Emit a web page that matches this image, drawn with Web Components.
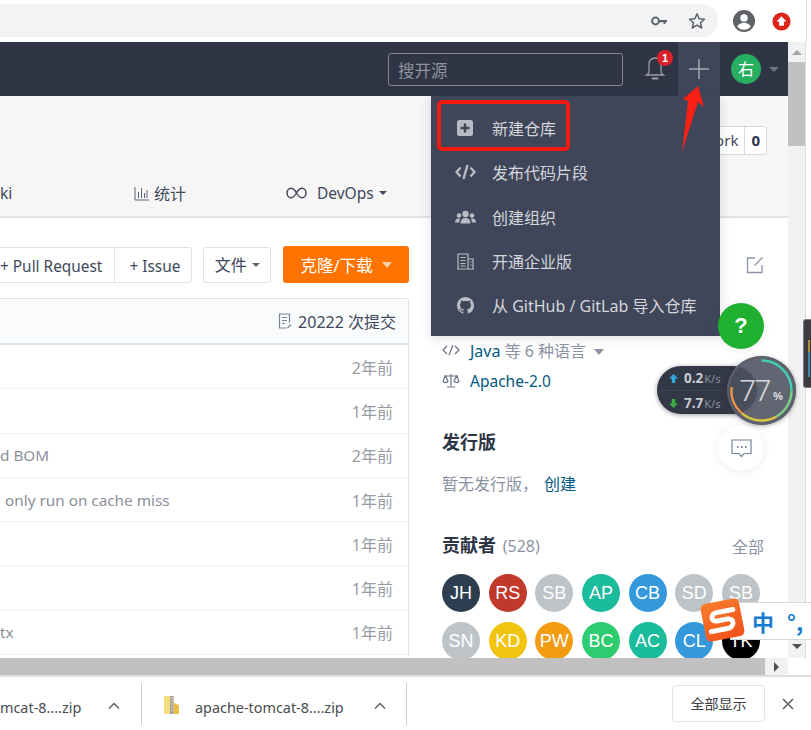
<!DOCTYPE html>
<html lang="zh">
<head>
<meta charset="utf-8">
<title>Gitee</title>
<style>
html,body{margin:0;padding:0;background:#fff;}
body{width:811px;height:730px;overflow:hidden;position:relative;display:flex;flex-direction:column;
  font-family:"Noto Sans","Noto Sans CJK SC",sans-serif;}
.shell{display:flex;flex:none;height:616px;width:806px;}
.page{flex:none;width:788px;height:616px;overflow:hidden;background:#fff;}
.main{display:flex;gap:33px;align-items:flex-start;}
</style>
</head>
<body>
<browser-bar></browser-bar>
<div class="shell">
  <div class="page">
    <site-nav></site-nav>
    <repo-head></repo-head>
    <div class="main">
      <repo-files></repo-files>
      <side-panel></side-panel>
    </div>
  </div>
  <scroll-v></scroll-v>
</div>
<scroll-h></scroll-h>
<download-bar></download-bar>

<new-menu></new-menu>
<red-notes></red-notes>
<float-tools></float-tools>
<speed-meter></speed-meter>
<side-widget></side-widget>
<ime-bar></ime-bar>

<script>
const FONT = '"Noto Sans","Noto Sans CJK SC",sans-serif';

class BrowserBar extends HTMLElement {
    connectedCallback() {
        this.attachShadow({ mode: 'open' }).innerHTML = `
      <style>
        :host{display:flex;align-items:center;flex:none;height:42px;width:806px;background:#fff;border-right:1px solid #dcdcdc;box-sizing:content-box;position:relative;overflow:hidden;}
        .omni{width:718px;height:33px;margin-top:-1px;background:#f1f3f4;border-radius:0 17px 17px 0;display:flex;align-items:center;justify-content:flex-end;gap:20px;padding-right:12px;box-sizing:border-box;flex:none;}
        .tools{display:flex;align-items:center;gap:16px;margin-left:14px;}
      </style>
      <div class="omni">
        <svg width="18" height="18" viewBox="0 0 18 18"><circle cx="5.500" cy="9" r="3.400" fill="none" stroke="#5f6368" stroke-width="2"/><path d="M9 8h8v2.200h-1.500V12h-2v-1.800H9z" fill="#5f6368"/></svg>
        <svg width="18" height="18" viewBox="0 0 18 18"><path d="M9 1.800l2.100 5 5.400.4-4.100 3.500 1.300 5.300L9 13.200l-4.700 2.800 1.300-5.300L1.500 7.200l5.400-.4z" fill="none" stroke="#5f6368" stroke-width="1.500" stroke-linejoin="round"/></svg>
      </div>
      <div class="tools">
        <svg width="24" height="24" viewBox="0 0 24 24"><circle cx="12" cy="12" r="11" fill="#5f6368"/><circle cx="12" cy="9" r="3.700" fill="#fff"/><path d="M5.200 17.500c1.500-2.700 4-3.800 6.800-3.800s5.300 1.100 6.800 3.800c-1.600 2-4 3.300-6.800 3.300s-5.200-1.300-6.800-3.300z" fill="#fff"/></svg>
        <svg width="19" height="19" viewBox="0 0 20 20"><circle cx="10" cy="10" r="9.500" fill="#dc2418"/><path d="M10 4.500l5.200 5.500h-2.700v4.500h-5V10H4.800z" fill="#fff"/></svg>
      </div>
      <svg style="position:absolute;left:808px;top:11px" width="20" height="20" viewBox="0 0 20 20"><circle cx="10" cy="10" r="9.500" fill="#dc2418"/></svg>
    `;
    }
}

class SiteNav extends HTMLElement {
    connectedCallback() {
        this.attachShadow({ mode: 'open' }).innerHTML = `
      <style>
        :host{display:flex;align-items:stretch;justify-content:flex-end;height:54px;background:#2f3545;}
        .search{width:235px;height:33px;box-sizing:border-box;margin-top:11px;border:1.500px solid #81858f;border-radius:3px;color:#90939c;font-size:16.500px;line-height:30px;padding:2px 0 0 9px;font-family:${FONT};}
        .bell{width:55px;display:flex;justify-content:center;align-items:center;position:relative;}
        .bell svg{margin-left:9px;margin-top:-1px;}
        .badge{position:absolute;left:34px;top:8px;width:16px;height:16px;border-radius:50%;background:#d9222a;color:#fff;font:bold 11px/16px "Liberation Sans",sans-serif;text-align:center;}
        .plus{width:42px;background:#3f4659;display:flex;align-items:center;justify-content:center;}
        .me{width:68px;display:flex;align-items:center;padding-left:11px;box-sizing:border-box;gap:8px;}
        .face{width:30px;height:30px;border-radius:50%;background:#27ae60;color:#fff;font-size:16px;line-height:30px;text-align:center;font-family:${FONT};}
        .caret{width:0;height:0;border:5px solid transparent;border-top:5px solid #6f7585;border-bottom:0;}
      </style>
      <div class="search">搜开源</div>
      <div class="bell">
        <svg width="24" height="28" viewBox="0 0 24 28"><path d="M12 3c-4.300 0-6 3.400-6 7v6.500c0 1.500-1 2.600-2.500 3.500h17c-1.500-.9-2.500-2-2.500-3.500V10c0-3.600-1.700-7-6-7z" fill="none" stroke="#9a9da6" stroke-width="1.300"/><path d="M9.500 23.500h5" stroke="#9a9da6" stroke-width="2" stroke-linecap="round"/></svg>
        <span class="badge">1</span>
      </div>
      <div class="plus">
        <svg width="22" height="22" viewBox="0 0 22 22"><path d="M11 1v20M1 11h20" stroke="#a6aab3" stroke-width="1.500"/></svg>
      </div>
      <div class="me"><span class="face">右</span><span class="caret"></span></div>
    `;
    }
}

class RepoHead extends HTMLElement {
    connectedCallback() {
        this.attachShadow({ mode: 'open' }).innerHTML = `
      <style>
        :host{display:block;height:122px;box-sizing:border-box;background:#f6f6f6;border-bottom:2px solid #e3e3e3;font-family:${FONT};color:#40485b;}
        .top{display:flex;justify-content:flex-end;height:81px;padding:30px 21px 0 0;box-sizing:border-box;}
        .fork{display:flex;height:29px;box-sizing:border-box;border:1px solid #d4d9e0;border-radius:3px;background:#fff;font-size:15px;line-height:27px;}
        .fork span{padding:0 6px 0 15px;}
        .fork b{border-left:1px solid #d4d9e0;padding:0 6px;color:#2d3850;}
        .tabs{display:flex;align-items:center;height:32px;font-size:15.500px;}
        .tab{display:flex;align-items:center;gap:5px;white-space:nowrap;}
        .tab.ki{width:134px;}
        .tab.stat{width:152px;font-size:16px;}
        .tab.dev{gap:10px;}
        .caret{display:inline-block;width:0;height:0;border:4px solid transparent;border-top:4px solid #40485b;border-bottom:0;margin-left:-5px;}
      </style>
      <div class="top"><div class="fork"><span>Fork</span><b>0</b></div></div>
      <div class="tabs">
        <div class="tab ki">ki</div>
        <div class="tab stat">
          <svg width="15" height="15" viewBox="0 0 15 15"><path d="M1 1v13h14M4.500 12V6M7.500 12V2M10.500 12V7M13 12V4" fill="none" stroke="#5b6478" stroke-width="1"/></svg>
          统计
        </div>
        <div class="tab dev">
          <svg width="21" height="12" viewBox="0 0 21 12"><path d="M10.500 6C8.500 2.500 7 1.300 5 1.300 2.700 1.300 1 3.300 1 6s1.700 4.700 4 4.700c2 0 3.500-1.200 5.500-4.700zm0 0c2-3.500 3.500-4.700 5.500-4.700 2.300 0 4 2 4 4.700s-1.700 4.700-4 4.700c-2 0-3.500-1.200-5.500-4.700z" fill="none" stroke="#40485b" stroke-width="1.500"/></svg>
          <span>DevOps</span><span class="caret"></span>
        </div>
      </div>
    `;
    }
}

class RepoFiles extends HTMLElement {
    connectedCallback() {
        this.attachShadow({ mode: 'open' }).innerHTML = `
      <style>
        :host{display:block;flex:none;width:409px;padding-top:28px;font-family:${FONT};color:#40485b;font-size:15.400px;}
        .acts{display:flex;align-items:stretch;height:37px;justify-content:flex-end;}
        .group{display:flex;border:1px solid #dce3e8;border-left:0;border-radius:0 3px 3px 0;height:36px;margin-top:1px;box-sizing:border-box;line-height:38px;background:#fff;white-space:nowrap;}
        .group span{padding:0 11px 0 14px;}
        .group .pr{padding:0 12px 0 0;border-right:1px solid #dce3e8;}
        .file{margin-left:11px;width:68px;height:36px;margin-top:1px;box-sizing:border-box;border:1px solid #dce3e8;border-radius:3px;font-size:16px;line-height:34px;display:flex;align-items:center;justify-content:center;gap:5px;}
        .clone{margin-left:12px;width:126px;background:#ff7300;border-radius:3px;color:#fff;font-size:16.500px;display:flex;align-items:center;justify-content:center;gap:9px;}
        .cr{width:0;height:0;border:4px solid transparent;border-top:4px solid #5c6478;border-bottom:0;}
        .clone .cr{border-width:6px 5px 0;border-top-color:#ffd2a8;border-style:solid;border-left-color:transparent;border-right-color:transparent;}
        .box{margin-top:15px;border:1px solid #dce3e8;border-left:0;border-bottom:0;border-radius:0 4px 0 0;}
        .head{height:44px;background:#fafbfc;border-bottom:2px solid #dce3e8;box-sizing:content-box;display:flex;align-items:center;justify-content:flex-end;gap:5px;padding-right:12px;font-size:16px;}
      </style>
      <div class="acts">
        <div class="group"><span class="pr">+ Pull Request</span><span>+ Issue</span></div>
        <div class="file">文件<i class="cr"></i></div>
        <div class="clone">克隆/下载<i class="cr"></i></div>
      </div>
      <div class="box">
        <div class="head">
          <svg width="15" height="18" viewBox="0 0 15 17"><path d="M11.500 10V1.500h-10v14h7M4 5h5M4 8h5M4 11h3M9.500 15.500l3.500-3.500" fill="none" stroke="#7b8494" stroke-width="1.200"/></svg>
          <span>20222 次提交</span>
        </div>
        <commit-row age="2年前"></commit-row>
        <commit-row age="1年前"></commit-row>
        <commit-row age="2年前" msg="d BOM"></commit-row>
        <commit-row age="1年前" msg="only run on cache miss" pad="5"></commit-row>
        <commit-row age="1年前"></commit-row>
        <commit-row age="1年前"></commit-row>
        <commit-row age="1年前" msg="tx"></commit-row>
      </div>
    `;
    }
}

class CommitRow extends HTMLElement {
    connectedCallback() {
        const msg = this.getAttribute('msg') || '';
        const pad = this.getAttribute('pad') || 0;
        this.attachShadow({ mode: 'open' }).innerHTML = `
      <style>
        :host{display:flex;justify-content:space-between;align-items:center;height:44.300px;box-sizing:border-box;border-bottom:1px solid #f1f3f5;color:#8b8f99;font-size:15.300px;padding:0 15px 0 ${pad}px;font-family:${FONT};}
        .age{color:#979ba5;font-size:16px;}
      </style>
      <span>${msg}</span><span class="age">${this.getAttribute('age')}</span>
    `;
    }
}

class SidePanel extends HTMLElement {
    connectedCallback() {
        const people = [['JH','#2c3e50'],['RS','#c0392b'],['SB','#bdc3c7'],['AP','#1abc9c'],['CB','#3498db'],['SD','#bdc3c7'],['SB','#bdc3c7'],
            ['SN','#bdc3c7'],['KD','#f1c40f'],['PW','#f39c12'],['BC','#2ecc71'],['AC','#1abc9c'],['CL','#3498db'],['TK','#000']];
        const chips = people.map(p => `<div class="chip" style="background:${p[1]}">${p[0]}</div>`).join('');
        this.attachShadow({ mode: 'open' }).innerHTML = `
      <style>
        :host{display:block;flex:none;width:322px;font-family:${FONT};color:#40485b;font-size:16px;}
        .edit{display:flex;justify-content:flex-end;height:116px;padding-top:38px;box-sizing:border-box;}
        .line{display:flex;align-items:center;height:31px;gap:8px;}
        .line a{color:#005980;}
        .gray{color:#8b93a3;}
        .sm{display:inline-block;width:0;height:0;border:5px solid transparent;border-top:6px solid #8b93a3;border-bottom:0;margin-left:8px;vertical-align:2px;}
        h3{margin:0;font-size:18px;font-weight:700;color:#2d3545;line-height:26px;}
        .rel{margin-top:33px;}
        .none{margin-top:16px;height:26px;line-height:26px;color:#8b93a3;white-space:nowrap;}
        .none a{color:#005980;margin-left:6px;}
        .con{display:flex;justify-content:space-between;align-items:center;margin-top:35px;}
        .con h3 small{font-size:16px;font-weight:400;color:#8b93a3;margin-left:2px;}
        .all{color:#8b93a3;}
        .grid{display:grid;grid-template-columns:repeat(7,38px);column-gap:8.670px;row-gap:10px;margin-top:15px;}
        .chip{width:38px;height:38px;border-radius:50%;color:#fff;font:18px/38px "Liberation Sans",sans-serif;text-align:center;}
      </style>
      <div class="edit">
        <svg width="18" height="18" viewBox="0 0 18 18"><path d="M9 2H1.500v14.500H16V9M16.500 1.500L8.500 9.500" fill="none" stroke="#8a94a6" stroke-width="1.300"/></svg>
      </div>
      <div class="line">
        <svg width="18" height="12" viewBox="0 0 18 12"><path d="M5 2L1 6l4 4M13 2l4 4-4 4M11 1L7 11" fill="none" stroke="#667085" stroke-width="1.200"/></svg>
        <span style="margin-left:2px"><a>Java</a> <span class="gray">等 6 种语言</span><i class="sm"></i></span>
      </div>
      <div class="line">
        <svg width="18" height="15" viewBox="0 0 18 15"><path d="M9 1v12M5 14h8M2 3h14M3.500 3L1 8c.5 2 4.500 2 5 0L3.500 3zM14.500 3L12 8c.5 2 4.500 2 5 0l-2.500-5z" fill="none" stroke="#667085" stroke-width="1.200"/></svg>
        <a style="margin-left:2px;font-size:15.500px">Apache-2.0</a>
      </div>
      <div class="rel"><h3>发行版</h3></div>
      <div class="none">暂无发行版，<a>创建</a></div>
      <div class="con"><h3>贡献者 <small>(528)</small></h3><span class="all">全部</span></div>
      <div class="grid">${chips}</div>
    `;
    }
}

class ScrollV extends HTMLElement {
    connectedCallback() {
        this.attachShadow({ mode: 'open' }).innerHTML = `
      <style>
        :host{display:flex;flex-direction:column;flex:none;width:18px;height:616px;background:#f1f1f1;box-sizing:border-box;border-right:1px solid #dcdcdc;}
        .btn{height:20px;display:flex;align-items:center;justify-content:center;flex:none;}
        .thumb{height:84px;background:#c1c1c1;flex:none;}
        .sp{flex:1;}
        .up{width:0;height:0;border:5px solid transparent;border-bottom:5px solid #a3a3a3;border-top:0;}
        .dn{width:0;height:0;border:5px solid transparent;border-top:5px solid #505050;border-bottom:0;}
      </style>
      <div class="btn"><i class="up"></i></div>
      <div class="thumb"></div>
      <div class="sp"></div>
      <div class="btn" style="margin-bottom:2px"><i class="dn"></i></div>
    `;
    }
}

class ScrollH extends HTMLElement {
    connectedCallback() {
        this.attachShadow({ mode: 'open' }).innerHTML = `
      <style>
        :host{display:flex;flex:none;width:788px;height:17px;background:#f1f1f1;}
        .thumb{width:765px;background:#c1c1c1;}
        .btn{flex:1;display:flex;align-items:center;justify-content:center;}
        .r{width:0;height:0;border:5px solid transparent;border-left:5px solid #505050;border-right:0;}
      </style>
      <div class="thumb"></div>
      <div class="btn"><i class="r"></i></div>
    `;
    }
}

class DownloadBar extends HTMLElement {
    connectedCallback() {
        this.attachShadow({ mode: 'open' }).innerHTML = `
      <style>
        :host{display:flex;align-items:center;flex:none;height:55px;box-sizing:border-box;border-top:2px solid #dcdfe3;background:#fff;font-family:${FONT};color:#4a4d52;font-size:14.400px;}
        .btn{margin-left:auto;width:93px;height:37px;box-sizing:border-box;border:1px solid #e0e2e5;border-radius:4px;font-size:14px;line-height:35px;text-align:center;color:#3c4043;}
        .x{width:46px;display:flex;justify-content:center;}
      </style>
      <download-item name="mcat-8....zip" w="142"></download-item>
      <download-item name="apache-tomcat-8....zip" w="265" icon></download-item>
      <div class="btn">全部显示</div>
      <div class="x"><svg width="12" height="12" viewBox="0 0 12 12"><path d="M1 1l10 10M11 1L1 11" stroke="#5f6368" stroke-width="1.600"/></svg></div>
    `;
    }
}

class DownloadItem extends HTMLElement {
    connectedCallback() {
        const w = this.getAttribute('w');
        const icon = this.hasAttribute('icon');
        this.attachShadow({ mode: 'open' }).innerHTML = `
      <style>
        :host{display:flex;align-items:center;flex:none;width:${w}px;height:42px;box-sizing:border-box;border-right:1px solid #c8cbcf;}
        .ic{margin:3px 16px 0 22px;flex:none;}
        .name{white-space:nowrap;flex:none;width:${icon ? 167 : 100}px;padding-top:8px;}
        .up{margin:4px 0 0 ${icon ? 11 : 7}px;}
      </style>
      ${icon ? `<svg class="ic" width="15" height="18" viewBox="0 0 15 18"><path d="M0 0h10v18H0z" fill="#f6dc7c"/><path d="M10 7l5 2v9h-5z" fill="#eebf45"/><path d="M6 0h3.500v18H6z" fill="#a3a39b"/><path d="M7 2h1.500M7 5h1.500M7 8h1.500M7 11h1.500M7 14h1.500" stroke="#e8e8e0" stroke-width="1"/></svg>` : ''}
      <span class="name">${this.getAttribute('name')}</span>
      <svg class="up" width="14" height="9" viewBox="0 0 14 9"><path d="M2 7.500l5-5 5 5" fill="none" stroke="#5f6368" stroke-width="1.500"/></svg>
    `;
    }
}

class NewMenu extends HTMLElement {
    connectedCallback() {
        this.attachShadow({ mode: 'open' }).innerHTML = `
      <style>
        :host{position:absolute;left:431px;top:96px;width:289px;height:240px;background:#3f4659;box-shadow:0 2px 10px rgba(60,70,90,.18);padding-top:10px;box-sizing:border-box;display:block;font-family:${FONT};}
      </style>
      <menu-item label="新建仓库"><svg width="16" height="16" viewBox="0 0 16 16"><rect width="16" height="16" rx="2.500" fill="#b9bcc4"/><path d="M8 3.500v9M3.500 8h9" stroke="#3f4659" stroke-width="2.400"/></svg></menu-item>
      <menu-item label="发布代码片段"><svg width="21" height="16" viewBox="0 0 21 16"><path d="M5.500 3.500L1.500 8l4 4.500M15.500 3.500l4 4.500-4 4.500M12.500 1l-4 14" fill="none" stroke="#b9bcc4" stroke-width="2.400"/></svg></menu-item>
      <menu-item label="创建组织"><svg width="21" height="14" viewBox="0 0 21 14"><circle cx="10.500" cy="4" r="3.200" fill="#b9bcc4"/><circle cx="4" cy="5.500" r="2.300" fill="#b9bcc4"/><circle cx="17" cy="5.500" r="2.300" fill="#b9bcc4"/><path d="M5.500 13.500c0-3.500 2-5.500 5-5.500s5 2 5 5.500zM0 12.500c0-2.500 1.500-4 3.500-4 .7 0 1.200.2 1.600.4-.7 1-1 2.300-1 3.600zM21 12.500c0-2.500-1.500-4-3.500-4-.7 0-1.200.2-1.600.4.700 1 1 2.300 1 3.600z" fill="#b9bcc4"/></svg></menu-item>
      <menu-item label="开通企业版"><svg width="17" height="17" viewBox="0 0 17 17"><path d="M1 16V1h10v15M11 6h5v10M0 16h17M3.500 4.500h5M3.500 7.500h5M3.500 10.500h5M3.500 13h5M13 9h1.500M13 12h1.500" fill="none" stroke="#b9bcc4" stroke-width="1.200"/></svg></menu-item>
      <menu-item label="从 GitHub / GitLab 导入仓库"><svg width="17" height="17" viewBox="0 0 16 16"><path fill="#b9bcc4" d="M8 0C3.580 0 0 3.580 0 8c0 3.540 2.290 6.530 5.470 7.590.4.070.55-.17.55-.38 0-.19-.01-.82-.01-1.490-2.010.37-2.530-.49-2.690-.94-.09-.23-.48-.94-.82-1.130-.28-.15-.68-.52-.01-.53.630-.01 1.080.58 1.230.82.720 1.210 1.870.87 2.330.66.070-.52.280-.87.510-1.070-1.780-.2-3.640-.89-3.640-3.950 0-.87.310-1.590.820-2.150-.08-.2-.36-1.020.080-2.120 0 0 .670-.21 2.200.82.640-.18 1.320-.27 2-.27.680 0 1.360.09 2 .27 1.530-1.040 2.200-.82 2.200-.82.440 1.100.160 1.920.080 2.120.510.560.820 1.270.820 2.150 0 3.070-1.870 3.750-3.650 3.950.290.25.540.730.540 1.480 0 1.070-.01 1.930-.01 2.200 0 .210.150.460.550.380A8.013 8.013 0 0016 8c0-4.420-3.580-8-8-8z"/></svg></menu-item>
    `;
    }
}

class MenuItem extends HTMLElement {
    connectedCallback() {
        this.attachShadow({ mode: 'open' }).innerHTML = `
      <style>
        :host{display:flex;align-items:center;height:44.300px;color:#d5d7dc;font-size:16px;white-space:nowrap;}
        .ic{width:61px;padding-left:7px;box-sizing:border-box;display:flex;justify-content:center;flex:none;}
      </style>
      <span class="ic"><slot></slot></span>
      <span>${this.getAttribute('label')}</span>
    `;
    }
}

class RedNotes extends HTMLElement {
    connectedCallback() {
        this.attachShadow({ mode: 'open' }).innerHTML = `
      <style>
        :host{position:absolute;left:0;top:0;width:0;height:0;display:block;}
        .box{position:absolute;left:437px;top:100px;width:133px;height:51px;box-sizing:border-box;border:4px solid #f01a10;border-radius:5px;}
        svg{position:absolute;left:676px;top:82px;}
      </style>
      <div class="box"></div>
      <svg width="32" height="74" viewBox="0 0 32 74"><path d="M22 4l6 21-6-5L6 70l6-51-5-2z" fill="#fa2015"/></svg>
    `;
    }
}

class FloatTools extends HTMLElement {
    connectedCallback() {
        this.attachShadow({ mode: 'open' }).innerHTML = `
      <style>
        :host{position:absolute;left:718px;top:303px;width:46px;display:flex;flex-direction:column;gap:15px;}
        .b{width:46px;height:46px;border-radius:50%;background:#fff;box-shadow:0 1px 8px rgba(80,90,110,.12);display:flex;align-items:center;justify-content:center;}
        .help{background:#20b02f;color:#fff;font:bold 22px/46px "Liberation Sans",sans-serif;}
      </style>
      <div class="b help">?</div>
      <div class="b"><svg width="20" height="20" viewBox="0 0 20 20"><path d="M10 2H2v14h14v-5M9 9l8-6M13 2.500l4 .5-1 4" fill="none" stroke="#8a94a6" stroke-width="1.200"/></svg></div>
      <div class="b"><svg width="21" height="19" viewBox="0 0 21 19"><path d="M1 1h19v13.500h-7l-2.500 3-2.500-3H1z" fill="none" stroke="#76829a" stroke-width="1.200"/><path d="M6 8h1.500M10 8h1.500M14 8h1.500" stroke="#76829a" stroke-width="1.800"/></svg></div>
    `;
    }
}

class SpeedMeter extends HTMLElement {
    connectedCallback() {
        this.attachShadow({ mode: 'open' }).innerHTML = `
      <style>
        :host{position:absolute;left:657px;top:356px;width:139px;height:69px;display:block;font-family:${FONT};}
        .pill{position:absolute;left:0;top:10px;width:100px;height:48px;border-radius:24px;background:#333846;box-shadow:0 1px 5px rgba(40,40,50,.45);color:#c8cbd2;font:bold 13.500px/24px "Noto Sans",sans-serif;}
        .row{display:flex;align-items:center;height:24px;padding-left:12px;gap:6px;}
        .row small{font-size:11px;font-weight:400;color:#8c909b;margin-left:1px;}
        .row + .row{border-top:1px solid #3f4452;box-sizing:border-box;height:25px;}
        .dial{position:absolute;left:70px;top:0;width:69px;height:69px;border-radius:50%;background:rgba(76,81,94,.88);box-shadow:0 0 0 2px #5c606c inset,0 1px 4px rgba(40,40,50,.4);}
        .dial svg{position:absolute;left:0;top:0;}
        .num{position:absolute;left:12px;top:12px;font:300 30px/44px "Noto Sans",sans-serif;color:#d6d8dc;letter-spacing:-2px;}
        .pc{position:absolute;left:46px;top:32px;font:bold 11px/16px "Noto Sans",sans-serif;color:#d6d8dc;}
      </style>
      <div class="pill">
        <div class="row"><svg width="9" height="9" viewBox="0 0 9 9"><path d="M4.500 0L9 4.500H6.200V9H2.800V4.500H0z" fill="#35a9dc"/></svg><span>0.2<small>K/s</small></span></div>
        <div class="row"><svg width="9" height="9" viewBox="0 0 9 9"><path d="M4.500 9L9 4.500H6.200V0H2.800v4.500H0z" fill="#3dad46"/></svg><span>7.7<small>K/s</small></span></div>
      </div>
      <div class="dial">
        <svg width="69" height="69" viewBox="0 0 69 69" fill="none" stroke-width="2.400">
          <path d="M34.500 4.500A30 30 0 0 1 64.500 34.500" stroke="#3fd0b3"/>
          <path d="M64.500 34.500A30 30 0 0 1 49.500 60.500" stroke="#7dcf85"/>
          <path d="M49.500 60.500A30 30 0 0 1 15 57.300" stroke="#dcc840"/>
          <path d="M15 57.300A30 30 0 0 1 4.700 31" stroke="#e9964a"/>
        </svg>
        <span class="num">77</span><span class="pc">%</span>
      </div>
    `;
    }
}

class SideWidget extends HTMLElement {
    connectedCallback() {
        this.attachShadow({ mode: 'open' }).innerHTML = `
      <style>
        :host{position:absolute;left:803px;top:319px;width:8px;height:69px;box-sizing:border-box;background:#3a3d42;border:1px solid #777b80;border-right:0;border-radius:3px 0 0 3px;display:block;overflow:hidden;}
        i{display:block;position:absolute;left:4px;width:2px;opacity:.8;}
      </style>
      <i style="top:20px;height:12px;background:#c9a83c"></i>
      <i style="top:32px;height:25px;background:#3f9fc4"></i>
    `;
    }
}

class ImeBar extends HTMLElement {
    connectedCallback() {
        this.attachShadow({ mode: 'open' }).innerHTML = `
      <style>
        :host{position:absolute;left:700px;top:599px;width:111px;height:44px;display:block;}
        .bar{position:absolute;left:30px;top:3px;width:81px;height:38px;box-sizing:border-box;background:#fff;border:1px solid #d8d8d8;border-right:0;display:flex;align-items:center;color:#1a7cd0;}
        .z{font:bold 22px/34px "Noto Sans CJK SC",sans-serif;margin-left:21px;}
        .p{font:bold 22px/30px "Noto Sans CJK SC",sans-serif;margin-left:13px;white-space:nowrap;}
        .s{position:absolute;left:3px;top:2px;width:39px;height:38px;border-radius:5px;background:linear-gradient(160deg,#fb7d2c,#f04f1a);transform:rotate(-11deg);display:flex;align-items:center;justify-content:center;}
      </style>
      <div class="bar"><span class="z">中</span><span class="p">°,</span></div>
      <div class="s"><svg width="33" height="27" viewBox="0 0 30 24"><path d="M26 4H11C5 4 4 11 10 11.500h10C26 12 25 20 18 20H3" fill="none" stroke="#fff" stroke-width="4.500" stroke-linecap="round"/></svg></div>
    `;
    }
}

customElements.define('browser-bar', BrowserBar);
customElements.define('site-nav', SiteNav);
customElements.define('repo-head', RepoHead);
customElements.define('repo-files', RepoFiles);
customElements.define('commit-row', CommitRow);
customElements.define('side-panel', SidePanel);
customElements.define('scroll-v', ScrollV);
customElements.define('scroll-h', ScrollH);
customElements.define('download-bar', DownloadBar);
customElements.define('download-item', DownloadItem);
customElements.define('new-menu', NewMenu);
customElements.define('menu-item', MenuItem);
customElements.define('red-notes', RedNotes);
customElements.define('float-tools', FloatTools);
customElements.define('speed-meter', SpeedMeter);
customElements.define('side-widget', SideWidget);
customElements.define('ime-bar', ImeBar);
</script>
</body>
</html>
